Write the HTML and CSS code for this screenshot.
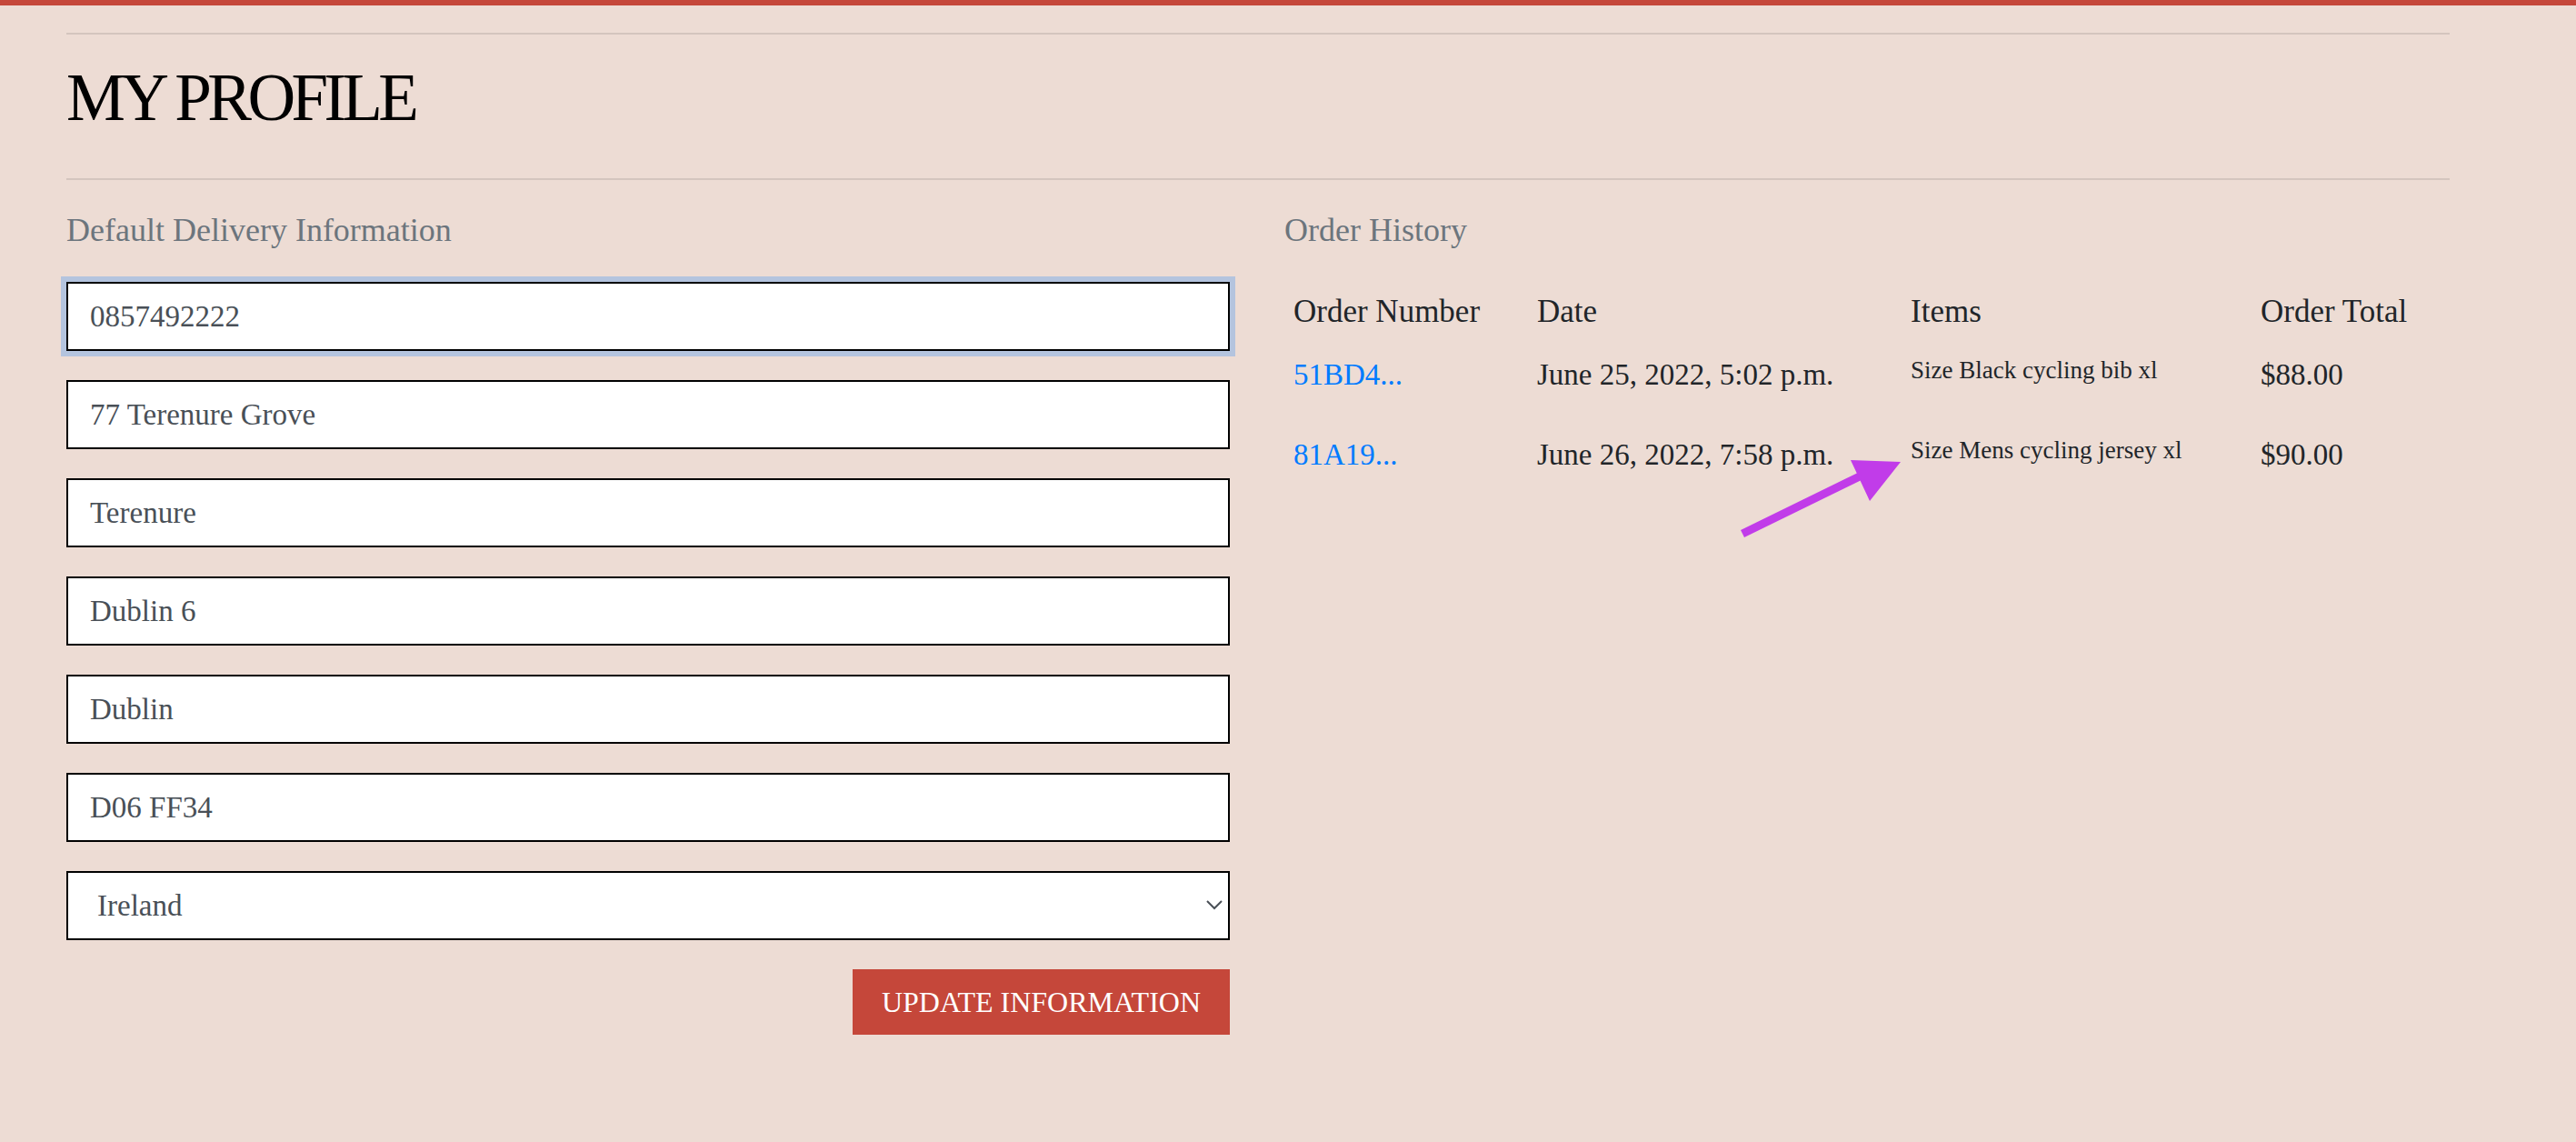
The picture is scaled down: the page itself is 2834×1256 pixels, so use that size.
FILE: index.html
```html
<!DOCTYPE html>
<html lang="en">
<head>
<meta charset="utf-8">
<title>My Profile</title>
<link rel="stylesheet" href="styles.css">
</head>
<body>
<div class="topbar"></div>
<main class="container">
  <hr class="rule rule-top">
  <h1 class="page-title">MY PROFILE</h1>
  <hr class="rule rule-bottom">
  <div class="columns">
    <section class="col">
      <h2 class="section-title">Default Delivery Information</h2>
      <form class="profile-form">
        <input class="field field-focused" type="text" value="0857492222">
        <input class="field" type="text" value="77 Terenure Grove">
        <input class="field" type="text" value="Terenure">
        <input class="field" type="text" value="Dublin 6">
        <input class="field" type="text" value="Dublin">
        <input class="field" type="text" value="D06 FF34">
        <div class="select-wrap">
          <select class="field field-select">
            <option>Ireland</option>
          </select>
          <svg class="chevron" width="18" height="11" viewBox="0 0 18 11"><path d="M1 1 L9 9 L17 1" fill="none" stroke="#4a5057" stroke-width="2"/></svg>
        </div>
        <div class="actions">
          <button type="button" class="btn">UPDATE INFORMATION</button>
        </div>
      </form>
    </section>
    <section class="col">
      <h2 class="section-title">Order History</h2>
      <table class="orders">
        <thead>
          <tr>
            <th class="c-num">Order Number</th>
            <th class="c-date">Date</th>
            <th class="c-items">Items</th>
            <th class="c-total">Order Total</th>
          </tr>
        </thead>
        <tbody>
          <tr>
            <td><a href="#" class="order-link">51BD4...</a></td>
            <td>June 25, 2022, 5:02 p.m.</td>
            <td><p class="item">Size Black cycling bib xl</p></td>
            <td>$88.00</td>
          </tr>
          <tr>
            <td><a href="#" class="order-link">81A19...</a></td>
            <td>June 26, 2022, 7:58 p.m.</td>
            <td><p class="item">Size Mens cycling jersey xl</p></td>
            <td>$90.00</td>
          </tr>
        </tbody>
      </table>
    </section>
  </div>
</main>
<svg class="annotation" width="2834" height="1256" viewBox="0 0 2834 1256">
  <line x1="1917" y1="587" x2="2052" y2="521" stroke="#c13ce9" stroke-width="9"/>
  <polygon points="2091,508 2036,506 2057,551" fill="#c13ce9"/>
</svg>
</body>
</html>
```
FILE: styles.css
```css
html, body {
  margin: 0;
  padding: 0;
}
body {
  background: #eddcd4;
  font-family: "Liberation Serif", "Times New Roman", serif;
  color: #212529;
  min-height: 1256px;
  position: relative;
}
.topbar {
  height: 6px;
  background: #c5473a;
}
.container {
  margin-left: 73px;
  width: 2622px;
}
.rule {
  border: 0;
  border-top: 2px solid rgba(0, 0, 0, 0.1);
  margin: 0;
  height: 0;
}
.rule-top {
  margin-top: 30px;
}
.page-title {
  margin: 27px 0 0;
  font-size: 73px;
  line-height: 86px;
  font-weight: normal;
  letter-spacing: -4.6px;
  color: #000;
}
.rule-bottom {
  margin-top: 45px;
}
.columns {
  display: grid;
  grid-template-columns: 1280px 1280px;
  column-gap: 60px;
  margin-top: 34px;
}
.section-title {
  margin: 0;
  font-size: 36px;
  line-height: 43px;
  font-weight: normal;
  color: #6c757d;
}
.profile-form {
  margin-top: 35px;
  display: flex;
  flex-direction: column;
  gap: 32px;
}
.field {
  display: block;
  box-sizing: border-box;
  width: 100%;
  height: 76px;
  margin: 0;
  padding: 12px 24px;
  border: 2px solid #000;
  border-radius: 0;
  background: #fff;
  font-family: "Liberation Serif", "Times New Roman", serif;
  font-size: 33px;
  line-height: 48px;
  color: #495057;
  outline: none;
}
.field-focused {
  box-shadow: 0 0 0 6px #b4c4de;
}
.select-wrap {
  position: relative;
}
.field-select {
  -webkit-appearance: none;
  appearance: none;
  padding: 0 40px 0 32px;
}
.chevron {
  position: absolute;
  right: 8px;
  top: 32px;
  pointer-events: none;
}
.actions {
  display: flex;
  justify-content: flex-end;
}
.btn {
  background: #c5473a;
  color: #fff;
  border: 0;
  border-radius: 0;
  padding: 12px 32px;
  height: 72px;
  font-family: "Liberation Serif", "Times New Roman", serif;
  font-size: 32px;
  line-height: 48px;
}
.orders {
  margin-top: 33px;
  width: 1280px;
  border-collapse: collapse;
  table-layout: fixed;
}
.orders th,
.orders td {
  padding: 10px;
  text-align: left;
  vertical-align: top;
  color: #212529;
}
.orders th {
  font-size: 35px;
  line-height: 49px;
  font-weight: normal;
}
.orders td {
  font-size: 33px;
  line-height: 50px;
}
.c-num { width: 248px; }
.c-date { width: 391px; }
.c-items { width: 365px; }
.c-total { width: 196px; }
.order-link {
  color: #007bff;
  text-decoration: none;
}
.item {
  margin: 0 0 30px;
  padding-top: 2px;
  font-size: 27px;
  line-height: 36px;
}
.annotation {
  position: absolute;
  left: 0;
  top: 0;
  pointer-events: none;
}
```
